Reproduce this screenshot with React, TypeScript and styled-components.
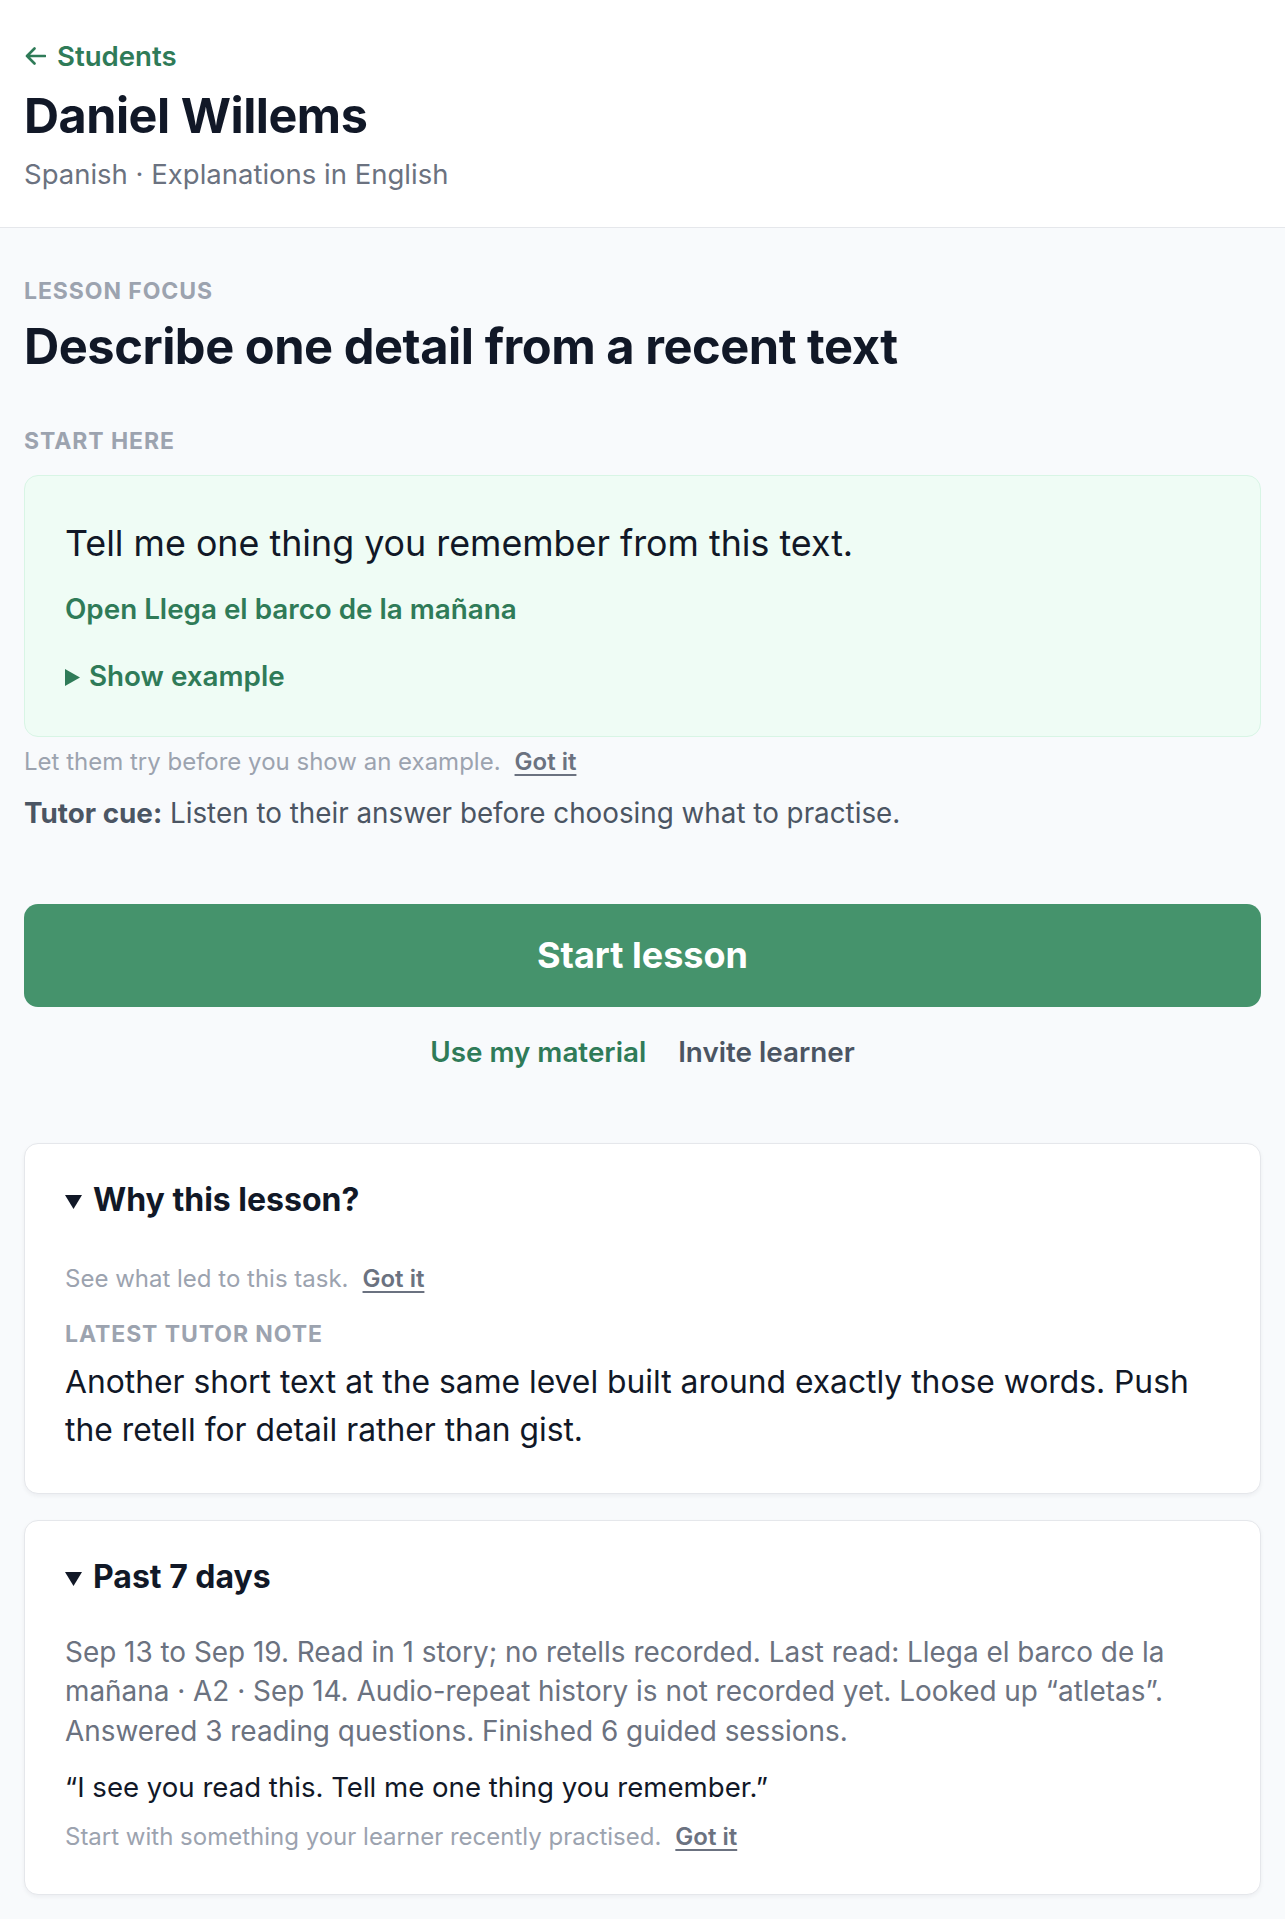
import React from "react";
import styled, { createGlobalStyle } from "styled-components";

const GlobalStyle = createGlobalStyle`
  * {
    box-sizing: border-box;
  }

  body {
    margin: 0;
    background: #f8fafc;
    font-family: Inter, "Noto Sans", "Liberation Sans", sans-serif;
    color: #111827;
    -webkit-font-smoothing: antialiased;
  }
`;

const Header = styled.header`
  background: #ffffff;
  border-bottom: 1.5px solid #e5e7eb;
  padding: 38px 24px 34px;
  display: flex;
  flex-direction: column;
  align-items: flex-start;
`;

const BackLink = styled.a`
  display: flex;
  align-items: center;
  gap: 11px;
  padding-left: 1px;
  font-size: 27.6px;
  line-height: 36px;
  font-weight: 600;
  color: #2f7b58;
  text-decoration: none;
  cursor: pointer;
`;

const Name = styled.h1`
  margin: 13px 0 0;
  font-size: 48.5px;
  line-height: 58px;
  font-weight: 700;
  letter-spacing: -0.01em;
  color: #111827;
`;

const Subtitle = styled.p`
  margin: 9.5px 0 0;
  font-size: 27.5px;
  line-height: 38px;
  color: #6b7280;
`;

const Main = styled.main`
  padding: 48px 24px 25px;
  display: flex;
  flex-direction: column;
`;

const Label = styled.div<{ $top?: number }>`
  margin-top: ${(p) => p.$top ?? 0}px;
  font-size: 23px;
  line-height: 30px;
  font-weight: 700;
  letter-spacing: 0.04em;
  text-transform: uppercase;
  color: #9ca3af;
`;

const Heading = styled.h2`
  margin: 13px 0 0;
  font-size: 48.8px;
  line-height: 55px;
  font-weight: 700;
  letter-spacing: -0.01em;
  color: #111827;
`;

const PromptCard = styled.section`
  margin-top: 19px;
  background: #effcf5;
  border: 1.5px solid #d8f5e5;
  border-radius: 14px;
  padding: 45px 40px 41px;
  display: flex;
  flex-direction: column;
  align-items: flex-start;
`;

const Prompt = styled.p`
  margin: 0;
  font-size: 35.8px;
  line-height: 44px;
  color: #111827;
`;

const GreenLink = styled.a<{ $top: number }>`
  display: block;
  margin-top: ${(p) => p.$top}px;
  font-size: 27.8px;
  line-height: 37px;
  font-weight: 600;
  color: #2f7b58;
  text-decoration: none;
  cursor: pointer;
`;

const Marker = styled.svg<{ $gap: number; $lift?: number }>`
  vertical-align: ${(p) => p.$lift ?? 0}px;
  margin-right: ${(p) => p.$gap}px;
  fill: currentColor;
`;

const Hint = styled.p<{ $top?: number }>`
  margin: ${(p) => p.$top ?? 0}px 0 0;
  font-size: 24px;
  line-height: 32px;
  color: #9ca3af;

  button {
    all: unset;
    cursor: pointer;
    margin-left: 14px;
    font-weight: 600;
    color: #6b7280;
    text-decoration: underline;
    text-decoration-thickness: 2px;
    text-underline-offset: 4px;
  }
`;

const Cue = styled.p`
  margin: 16px 0 0;
  font-size: 27.8px;
  line-height: 38px;
  color: #4b5563;

  strong {
    font-weight: 700;
  }
`;

const StartButton = styled.button`
  margin-top: 72px;
  height: 103px;
  width: 100%;
  border: none;
  border-radius: 14px;
  background: #45936c;
  color: #ffffff;
  font-family: inherit;
  font-size: 36px;
  font-weight: 700;
  cursor: pointer;
`;

const LinkRow = styled.div`
  margin-top: 26px;
  display: flex;
  justify-content: center;
  gap: 32px;
`;

const TextButton = styled.button<{ $tone: "green" | "gray" }>`
  all: unset;
  cursor: pointer;
  font-size: 27.8px;
  line-height: 38px;
  font-weight: 600;
  color: ${(p) => (p.$tone === "green" ? "#2f7b58" : "#4b5563")};
`;

const Card = styled.section<{ $top: number; $bottom: number }>`
  margin-top: ${(p) => p.$top}px;
  background: #ffffff;
  border: 1.5px solid #e5e7eb;
  border-radius: 14px;
  box-shadow: 0 2px 4px rgba(15, 23, 42, 0.05);
  padding: 36px 40px ${(p) => p.$bottom}px;
`;

const Summary = styled.div`
  font-size: 32px;
  line-height: 40px;
  font-weight: 700;
  color: #111827;
`;

const Note = styled.p`
  margin: 9px 0 0;
  font-size: 31.8px;
  line-height: 48px;
  color: #111827;
`;

const Recap = styled.p`
  margin: 36px 0 0;
  font-size: 27.9px;
  line-height: 39.5px;
  color: #6b7280;
`;

const Quote = styled.p`
  margin: 17px 0 0;
  font-size: 27.6px;
  line-height: 38px;
  color: #111827;
`;

const RightMarker = () => (
  <Marker $gap={9} width={15} height={17} viewBox="0 0 15 17" aria-hidden>
    <path d="M0 0 L15 8.5 L0 17 Z" />
  </Marker>
);

const DownMarker = () => (
  <Marker
    $gap={11}
    $lift={2}
    width={17}
    height={14}
    viewBox="0 0 17 14"
    aria-hidden
  >
    <path d="M0 0 L17 0 L8.5 14 Z" />
  </Marker>
);

const BackArrow = () => (
  <svg width={21} height={18} viewBox="0 0 21 18" aria-hidden>
    <path
      d="M20 9 H2 M9.5 1.5 L2 9 L9.5 16.5"
      fill="none"
      stroke="currentColor"
      strokeWidth={2.6}
      strokeLinecap="round"
      strokeLinejoin="round"
    />
  </svg>
);

export default function App() {
  return (
    <>
      <GlobalStyle />
      <Header>
        <BackLink>
          <BackArrow />
          Students
        </BackLink>
        <Name>Daniel Willems</Name>
        <Subtitle>Spanish · Explanations in English</Subtitle>
      </Header>

      <Main>
        <Label>Lesson focus</Label>
        <Heading>Describe one detail from a recent text</Heading>

        <Label $top={52}>Start here</Label>
        <PromptCard>
          <Prompt>Tell me one thing you remember from this text.</Prompt>
          <GreenLink $top={26}>Open Llega el barco de la mañana</GreenLink>
          <GreenLink $top={30}>
            <RightMarker />
            Show example
          </GreenLink>
        </PromptCard>
        <Hint $top={9}>
          Let them try before you show an example.
          <button>Got it</button>
        </Hint>
        <Cue>
          <strong>Tutor cue:</strong> Listen to their answer before choosing
          what to practise.
        </Cue>

        <StartButton>Start lesson</StartButton>
        <LinkRow>
          <TextButton $tone="green">Use my material</TextButton>
          <TextButton $tone="gray">Invite learner</TextButton>
        </LinkRow>

        <Card $top={72} $bottom={39}>
          <Summary>
            <DownMarker />
            Why this lesson?
          </Summary>
          <Hint $top={43}>
            See what led to this task.
            <button>Got it</button>
          </Hint>
          <Label $top={24}>Latest tutor note</Label>
          <Note>
            Another short text at the same level built around exactly those
            words. Push the retell for detail rather than gist.
          </Note>
        </Card>

        <Card $top={26} $bottom={41}>
          <Summary>
            <DownMarker />
            Past 7 days
          </Summary>
          <Recap>
            Sep 13 to Sep 19. Read in 1 story; no retells recorded. Last read:
            Llega el barco de la mañana · A2 · Sep 14. Audio-repeat history is
            not recorded yet. Looked up “atletas”. Answered 3 reading
            questions. Finished 6 guided sessions.
          </Recap>
          <Quote>“I see you read this. Tell me one thing you remember.”</Quote>
          <Hint $top={15}>
            Start with something your learner recently practised.
            <button>Got it</button>
          </Hint>
        </Card>
      </Main>
    </>
  );
}
